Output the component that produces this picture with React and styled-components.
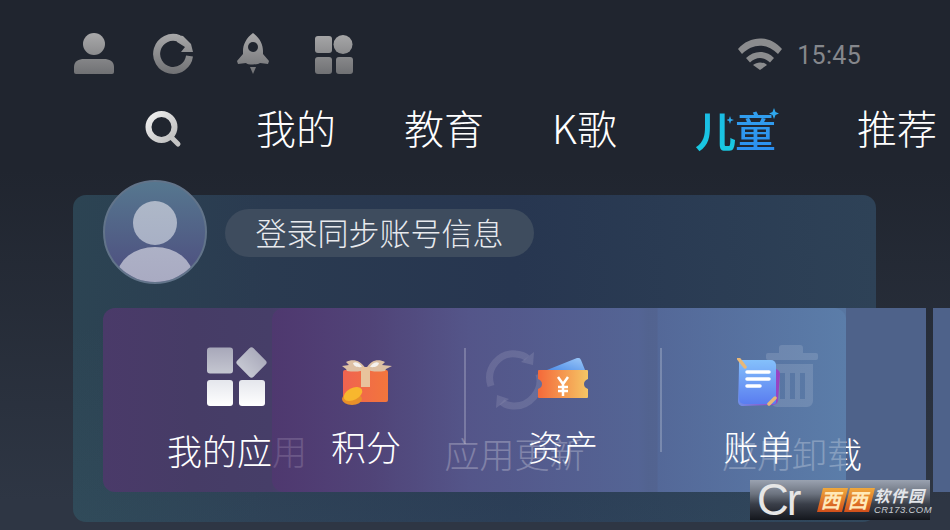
import React from "react";
import styled, { createGlobalStyle } from "styled-components";

const Global = createGlobalStyle`
  html, body { margin: 0; padding: 0; background: #20252f; }
  * { box-sizing: border-box; }
`;
const CJK = `"Noto Sans CJK SC", "Noto Sans", sans-serif`;

const Page = styled.div`
  position: relative; width: 950px; height: 530px; overflow: hidden;
  background: linear-gradient(180deg, #20252f 0, #20252f 170px, #2e3644 500px, #2e3644 100%);
  font-family: ${CJK};
`;
const StatusBar = styled.header`
  display: flex; align-items: center; gap: 39px;
  padding: 33px 89px 0 74px; height: 74px;
`;
const Glyph = styled.svg`display: block; flex: none;`;
const StatusRight = styled.div`
  margin-left: auto; display: flex; align-items: center; gap: 15px;
`;
const Clock = styled.span`
  font-family: Roboto, sans-serif; font-size: 25px; line-height: 30px; color: #85878c;
  letter-spacing: 0.3px; padding-top: 4px;
`;
const Tabs = styled.nav`
  display: flex; align-items: center; gap: 68px;
  margin-top: 26px; height: 60px; padding-left: 145px; white-space: nowrap;
`;
const Tab = styled.span`
  flex: none; font-size: 40px; line-height: 54px; margin-top: -6px; color: #fff; font-weight: 300;
`;
const LogoSlot = styled.span`
  position: relative; flex: none; width: 104px; height: 60px; display: flex; align-items: center; padding-left: 10px;
`;
const LogoChar = styled.span`
  font-size: 41px; line-height: 60px; font-weight: ${p => p.$blue ? 500 : 700}; margin-right: -1px; margin-top: -2px;
  background: ${p => p.$blue ? "linear-gradient(180deg, #33a4ee, #2a8cf0)" : "linear-gradient(180deg, #1bb8e6, #18cbe0)"};
  -webkit-background-clip: text; background-clip: text; color: transparent;
`;
const Spark = styled.svg`position: absolute; left: 42px; top: 8px;`;
const Card = styled.section`
  margin: 35px 0 0 73px; width: 803px; height: 327px; border-radius: 13px;
  background:
    linear-gradient(180deg, rgba(70,110,125,0) 40%, rgba(70,110,125,.16) 100%),
    linear-gradient(90deg, #2c4453 0, #2a3a50 25%, #273650 55%, #2e4257 100%);
`;
const Profile = styled.div`
  display: flex; align-items: center; padding-left: 30px; transform: translateY(-15px); height: 104px; gap: 18px;
`;
const Avatar = styled.div`
  position: relative; flex: none; width: 104px; height: 104px; border-radius: 50%; overflow: hidden;
  border: 2px solid #62748a;
  background: linear-gradient(180deg, #56778f 0, #4f5582 80%, #51507f 100%);
`;
const Head = styled.div`
  position: absolute; left: 28px; top: 19px; width: 44px; height: 44px; border-radius: 50%;
  background: linear-gradient(180deg, #aeb8c8, #a8b0c5);
`;
const Shoulders = styled.div`
  position: absolute; left: 12px; top: 65px; width: 76px; height: 60px; border-radius: 50%;
  background: linear-gradient(180deg, #adb1c6, #a6a6bf);
`;
const Pill = styled.div`
  width: 309px; height: 48px; border-radius: 24px; margin-top: 2px; background: #3e4c5e;
  color: #e8eaee; font-size: 31px; line-height: 45px; font-weight: 300; text-align: center; white-space: nowrap;
`;
const Stage = styled.div`
  position: relative; margin: 9px 0 0 30px; width: 743px; height: 184px;
`;
const Underlay = styled.div`
  position: absolute; left: 169px; top: 0; width: 654px; height: 184px;
  background: #4e628a;
`;
const Sliver = styled.div`
  position: absolute; left: 830px; top: 0; width: 40px; height: 184px; background: #4e628a;
`;
const Front = styled.div`
  position: absolute; inset: 0; border-radius: 12px;
  display: grid; grid-template-columns: 268px 287px 268px;
  background: linear-gradient(90deg, #4a3a69 0, #463c66 12%, #463e68 22.700%, #504478 30%, #54588c 48%, #536696 73%, #546a9a 76%, #5b7da9 100%);
`;
const Over = styled.div`
  position: absolute; left: 169px; top: 0; width: 654px; height: 184px; border-radius: 12px 0 0 12px;
  display: grid; grid-template-columns: 193px 196px 195px;
  background: linear-gradient(90deg,
    rgba(80,55,112,.86) 0, rgba(80,66,118,.8) 15%, rgba(84,84,136,.74) 30%, rgba(84,100,148,.74) 56%,
    rgba(82,98,142,.76) 57.500%, rgba(82,98,142,.76) 58.900%, rgba(84,104,152,.74) 59%,
    rgba(91,125,169,.74) 87.7%, rgba(78,98,138,0) 87.8%, rgba(78,98,138,0) 100%);
`;
const Item = styled.div`
  position: relative; display: flex; flex-direction: column; align-items: center;
  padding-top: ${p => p.$top}px; padding-right: ${p => p.$inset || 0}px;
  color: #fff;
  &::before {
    content: ""; display: ${p => p.$line ? "block" : "none"}; position: absolute; left: -1px; top: 40px;
    width: 2px; height: ${p => p.$line}px; background: rgba(255,255,255,.22);
  }
`;
const IconBox = styled.div`
  height: ${p => p.$h}px; display: flex; align-items: flex-start; justify-content: center;
`;
const Label = styled.span`
  display: block; font-size: ${p => p.$size}px; line-height: 44px; margin-top: ${p => p.$mt}px; white-space: nowrap; font-weight: 300;
`;
const Watermark = styled.div`
  position: absolute; left: 750px; top: 480px; width: 180px; height: 40px; display: flex; align-items: center;
  background: linear-gradient(180deg, #9aa2b0 0, #6c737f 35%, #3a3f49 60%, #14171d 100%);
`;
const MarkC = styled.span`
  flex: none; width: 70px; padding-left: 7px; font-family: "Liberation Sans", sans-serif; font-size: 44px; line-height: 40px; color: #e6e6e6;
  letter-spacing: -2px;
`;
const MarkBadge = styled.span`
  flex: none; display: inline-block; margin-right: 2px; width: 25px; height: 24px; line-height: 23px; text-align: center;
  font-size: 20px; font-weight: 700; color: #ffe9b8; transform: skewX(-14deg);
  background: linear-gradient(180deg, #f0a83c, #d24f1a);
`;
const MarkRight = styled.span`
  display: flex; flex-direction: column; font-style: italic; color: #e4e6ea; line-height: 1;
`;
const MarkCn = styled.span`font-size: 16px; font-weight: 700; letter-spacing: 1px; line-height: 19px;`;
const MarkEn = styled.span`font-family: "Liberation Sans", sans-serif; font-size: 9.5px; letter-spacing: .4px; line-height: 10px; color: #c8ccd2;`;

const Defs = () => (
  <svg width="0" height="0" style={{ position: "absolute" }}>
    <defs>
      <linearGradient id="gs2" gradientUnits="userSpaceOnUse" x1="0" y1="0" x2="0" y2="41"><stop offset="0" stopColor="#a9a9aa" /><stop offset="1" stopColor="#707174" /></linearGradient>
      <linearGradient id="gsearch" x1="0" y1="0" x2="1" y2="1"><stop offset="0" stopColor="#f0f0f0" /><stop offset="1" stopColor="#bdbdbd" /></linearGradient>
      <linearGradient id="gapp" gradientUnits="userSpaceOnUse" x1="0" y1="0" x2="0" y2="60"><stop offset="0" stopColor="#a6a6b8" /><stop offset=".48" stopColor="#c6c8d2" /><stop offset=".56" stopColor="#e4e6ec" /><stop offset="1" stopColor="#fff" /></linearGradient>
      <linearGradient id="ggift" x1="0" y1="0" x2="1" y2="0"><stop offset="0" stopColor="#f06350" /><stop offset="1" stopColor="#f2763c" /></linearGradient>
      <linearGradient id="gtick" x1="0" y1="0" x2="1" y2="0"><stop offset="0" stopColor="#f4693a" /><stop offset="1" stopColor="#f5c665" /></linearGradient>
      <linearGradient id="gdoc" x1="0" y1="0" x2="0" y2="1"><stop offset="0" stopColor="#84c0fb" /><stop offset="1" stopColor="#5a7df0" /></linearGradient>
      <linearGradient id="gback" x1="0" y1="0" x2="1" y2="0"><stop offset="0" stopColor="#6f8fe8" /><stop offset="1" stopColor="#9a3fc0" /></linearGradient>
      <linearGradient id="gcard" x1="0" y1="1" x2="1" y2="0"><stop offset="0" stopColor="#4f8ee8" /><stop offset="1" stopColor="#9cc8f8" /></linearGradient>
    </defs>
  </svg>
);

const UserIcon = () => (
  <Glyph width="40" height="41" viewBox="0 0 40 41">
    <circle cx="20" cy="11" r="11" fill="url(#gs2)" />
    <path d="M0 34c0-6 5-8 10-8h20c5 0 10 2 10 8v5a2 2 0 0 1-2 2H2a2 2 0 0 1-2-2z" fill="url(#gs2)" />
  </Glyph>
);
const RefreshIcon = () => (
  <Glyph width="40" height="41" viewBox="0 0 40 41">
    <path d="M36.500 23A16.500 16.500 0 1 1 26 5.500" fill="none" stroke="url(#gs2)" strokeWidth="7" />
    <path d="M24 2l6 1 4 4 4 4 2 8H28l4-5-8-5z" fill="url(#gs2)" />
  </Glyph>
);
const RocketIcon = () => (
  <Glyph width="42" height="41" viewBox="0 0 42 41">
    <path d="M21 0c7 5 10 12 10 18v3l6 7-1 3-8-1c-1 1-3 1.500-7 1.500s-6-.5-7-1.500l-8 1-1-3 6-7v-3c0-6 3-13 10-18z" fill="url(#gs2)" />
    <circle cx="21" cy="14" r="5" fill="#20252f" />
    <path d="M18 34h6l-3 7z" fill="url(#gs2)" />
  </Glyph>
);
const AppsIcon = () => (
  <Glyph width="40" height="41" viewBox="0 0 40 41">
    <rect x="2" y="3" width="17" height="17" rx="3" fill="url(#gs2)" />
    <circle cx="30" cy="11.500" r="9.500" fill="url(#gs2)" />
    <rect x="2" y="24" width="17" height="17" rx="3" fill="url(#gs2)" />
    <rect x="23" y="24" width="17" height="17" rx="3" fill="url(#gs2)" />
  </Glyph>
);
const WifiIcon = () => (
  <Glyph width="44" height="32" viewBox="0 0 44 32" fill="#8b8c8e">
    <path d="M0 11C12-3 32-3 44 11l-4 5C29 5 15 5 4 16z" />
    <path d="M8 20c8-8 20-8 28 0l-4 4.500c-6-6-14-6-20 0z" />
    <path d="M15 27c4-3.500 10-3.500 14 0l-7 5z" />
  </Glyph>
);
const SearchIcon = () => (
  <Glyph width="43" height="40" viewBox="0 0 43 40">
    <circle cx="16.500" cy="17" r="13" fill="none" stroke="url(#gsearch)" strokeWidth="6" />
    <path d="M26 27l7 7" stroke="#c4c4c4" strokeWidth="5" strokeLinecap="round" />
  </Glyph>
);
const AppGrid = () => (
  <Glyph width="60" height="62" viewBox="0 0 60 62">
    <rect x="0" y="1.500" width="26" height="26" rx="3" fill="url(#gapp)" />
    <rect x="33" y="5" width="23" height="23" rx="3" transform="rotate(45 44.500 16.500)" fill="url(#gapp)" />
    <rect x="0" y="34" width="26" height="26" rx="3" fill="url(#gapp)" />
    <rect x="32" y="34" width="26" height="26" rx="3" fill="url(#gapp)" />
  </Glyph>
);
const SyncFaint = () => (
  <Glyph width="58" height="60" viewBox="0 0 58 60" fill="none" stroke="rgba(255,255,255,.44)" strokeWidth="7">
    <path d="M5 36C-1 18 14 2 30 4c5 .5 9 2 11 4" />
    <path d="M48 2l-1 13-12-3z" fill="rgba(255,255,255,.44)" stroke="none" />
    <path d="M53 24c5 17-10 33-26 32-5-.5-9-2-11-4" />
    <path d="M10 58l1-13 12 4z" fill="rgba(255,255,255,.44)" stroke="none" />
  </Glyph>
);
const TrashFaint = () => (
  <Glyph width="52" height="62" viewBox="0 0 52 62" fill="rgba(255,255,255,.5)">
    <path d="M16 0h18a3 3 0 0 1 3 3v5h13a2 2 0 0 1 2 2v3a2 2 0 0 1-2 2H2a2 2 0 0 1-2-2v-3a2 2 0 0 1 2-2h11V3a3 3 0 0 1 3-3z" />
    <path fillRule="evenodd" d="M5 19h42v37a6 6 0 0 1-6 6H11a6 6 0 0 1-6-6zM14 28v26h5V28zM24 28v26h5V28zM34 28v26h5V28z" />
  </Glyph>
);
const Gift = () => (
  <Glyph width="54" height="48" viewBox="-2 0 54 48">
    <rect x="2" y="11" width="45" height="32" rx="2" fill="url(#ggift)" />
    <path d="M25 10C19 0 11 0 5 3l3 3-7 1 4 3 1 2c7 1 14 1 19-2zM25 10c5-10 13-10 19-7l-3 3 10 1-6 3-1 2c-7 1-14 1-19-2z" fill="#ddc0a4" />
    <path d="M12 4c4-2 7 1 9 4-4 .5-8 0-9-4zM38 4c-4-2-7 1-9 4 4 .5 8 0 9-4z" fill="#f4f1ee" />
    <rect x="20" y="8" width="9" height="20" fill="#e8c39c" />
    <ellipse cx="11" cy="40" rx="10" ry="6" fill="#e8902a" />
    <ellipse cx="12" cy="35" rx="10" ry="6" transform="rotate(-28 12 35)" fill="#f8b72e" />
  </Glyph>
);
const Ticket = () => (
  <Glyph width="52" height="44" viewBox="0 0 52 44">
    <path d="M10 12L40 0c2-.5 3 0 4 2l4 10z" fill="url(#gcard)" />
    <path d="M2 12h48a1 1 0 0 1 1 1v8c-3 1-4 3-4 5s1 4 4 5v8a1 1 0 0 1-1 1H2a1 1 0 0 1-1-1v-8c3-1 4-3 4-5s-1-4-4-5v-8a1 1 0 0 1 1-1z" fill="url(#gtick)" />
    <path d="M21 19l5 7 5-7M26 26v12M21 29h10M21 33h10" stroke="#fff" strokeWidth="2.500" fill="none" />
  </Glyph>
);
const Doc = () => (
  <Glyph width="44" height="50" viewBox="0 0 44 50">
    <path d="M2 8l36 3a5 5 0 0 1 5 5l-2 26a5 5 0 0 1-5 5L6 48c-3 0-5-2-5-5z" fill="url(#gback)" />
    <path d="M4 2h30a5 5 0 0 1 5 5v37a2 2 0 0 1-2 2H7a5 5 0 0 1-5-5V4a2 2 0 0 1 2-2z" fill="url(#gdoc)" />
    <path d="M1 0l7 9M32 46l6-6" stroke="#e8b878" strokeWidth="3.500" strokeLinecap="round" />
    <path d="M10 14h22M10 21h22M10 28h13" stroke="#fff" strokeWidth="3.500" strokeLinecap="round" />
  </Glyph>
);

export default function App() {
  return (
    <Page>
      <Global />
      <Defs />
      <StatusBar>
        <UserIcon /><RefreshIcon /><RocketIcon /><AppsIcon />
        <StatusRight><WifiIcon /><Clock>15:45</Clock></StatusRight>
      </StatusBar>
      <Tabs>
        <SearchIcon />
        <Tab>我的</Tab><Tab>教育</Tab><Tab>K歌</Tab>
        <LogoSlot>
          <LogoChar>儿</LogoChar><LogoChar $blue>童</LogoChar>
          <Spark width="52" height="16" viewBox="0 0 52 16" fill="#2fa8ee">
            <path d="M3 8l1 3 3 1-3 1-1 3-1-3-3-1 3-1zM47 0l1.500 4 3.500 1.500-3.500 1.500L47 11l-1.500-4L42 5.500 45.500 4z" />
          </Spark>
        </LogoSlot>
        <Tab>推荐</Tab>
      </Tabs>
      <Card>
        <Profile>
          <Avatar><Head /><Shoulders /></Avatar>
          <Pill>登录同步账号信息</Pill>
        </Profile>
        <Stage>
          <Underlay />
          <Sliver />
          <Front>
            <Item $top={38}><IconBox $h={62}><AppGrid /></IconBox><Label $size={35} $mt={20}>我的应用</Label></Item>
            <Item $top={42}><IconBox $h={62}><SyncFaint /></IconBox><Label $size={35} $mt={19}>应用更新</Label></Item>
            <Item $top={37}><IconBox $h={62}><TrashFaint /></IconBox><Label $size={35} $mt={24}>应用卸载</Label></Item>
          </Front>
          <Over>
            <Item $top={51} $inset={5}><IconBox $h={50}><Gift /></IconBox><Label $size={35} $mt={15}>积分</Label></Item>
            <Item $top={50} $line={96}><IconBox $h={50}><Ticket /></IconBox><Label $size={35} $mt={16}>资产</Label></Item>
            <Item $top={50} $line={104}><IconBox $h={50}><Doc /></IconBox><Label $size={35} $mt={16}>账单</Label></Item>
          </Over>
        </Stage>
      </Card>
      <Watermark>
        <MarkC>Cr</MarkC>
        <MarkBadge>西</MarkBadge><MarkBadge>西</MarkBadge>
        <MarkRight><MarkCn>软件园</MarkCn><MarkEn>CR173.COM</MarkEn></MarkRight>
      </Watermark>
    </Page>
  );
}
